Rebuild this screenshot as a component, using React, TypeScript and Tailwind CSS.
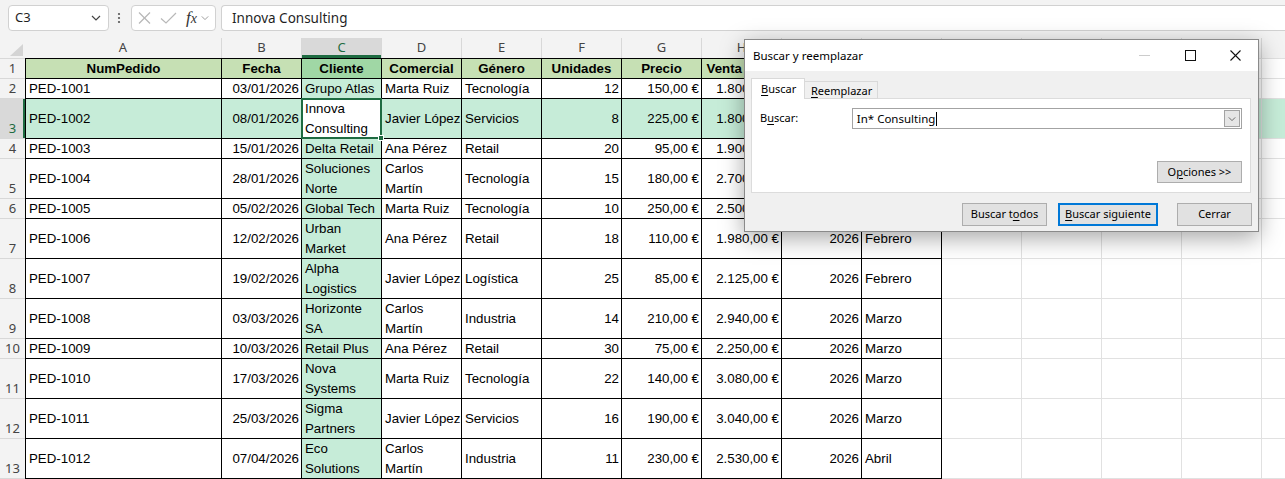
import React from "react";

const CELL_FONT = "font-['Liberation_Sans',Arial,sans-serif]";
const UI_FONT = "font-['Noto_Sans','Open_Sans',sans-serif]";

const LETTERS = ["A", "B", "C", "D", "E", "F", "G", "H", "I", "J", "K", "L", "M", "N", ""];
const COLW = [
  "w-[197px]",
  "w-[80px]",
  "w-[80px]",
  "w-[80px]",
  "w-[80px]",
  "w-[80px]",
  "w-[80px]",
  "w-[80px]",
  "w-[80px]",
  "w-[80px]",
  "w-[80px]",
  "w-[80px]",
  "w-[80px]",
  "w-[80px]",
  "w-[80px]",
];

type Val = string | string[];
type Row = { tall: boolean; v: Val[] };

const HEAD = ["NumPedido", "Fecha", "Cliente", "Comercial", "Género", "Unidades", "Precio", "Venta Total", "Año", "Mes"];
const ALIGN_R = [false, true, false, false, false, true, true, true, true, false];

const ROWS: Row[] = [
  { tall: false, v: ["PED-1001", "03/01/2026", "Grupo Atlas", "Marta Ruiz", "Tecnología", "12", "150,00 €", "1.800,00 €", "2026", "Enero"] },
  { tall: true, v: ["PED-1002", "08/01/2026", ["Innova", "Consulting"], "Javier López", "Servicios", "8", "225,00 €", "1.800,00 €", "2026", "Enero"] },
  { tall: false, v: ["PED-1003", "15/01/2026", "Delta Retail", "Ana Pérez", "Retail", "20", "95,00 €", "1.900,00 €", "2026", "Enero"] },
  { tall: true, v: ["PED-1004", "28/01/2026", ["Soluciones", "Norte"], ["Carlos", "Martín"], "Tecnología", "15", "180,00 €", "2.700,00 €", "2026", "Enero"] },
  { tall: false, v: ["PED-1005", "05/02/2026", "Global Tech", "Marta Ruiz", "Tecnología", "10", "250,00 €", "2.500,00 €", "2026", "Febrero"] },
  { tall: true, v: ["PED-1006", "12/02/2026", ["Urban", "Market"], "Ana Pérez", "Retail", "18", "110,00 €", "1.980,00 €", "2026", "Febrero"] },
  { tall: true, v: ["PED-1007", "19/02/2026", ["Alpha", "Logistics"], "Javier López", "Logística", "25", "85,00 €", "2.125,00 €", "2026", "Febrero"] },
  { tall: true, v: ["PED-1008", "03/03/2026", ["Horizonte", "SA"], ["Carlos", "Martín"], "Industria", "14", "210,00 €", "2.940,00 €", "2026", "Marzo"] },
  { tall: false, v: ["PED-1009", "10/03/2026", "Retail Plus", "Ana Pérez", "Retail", "30", "75,00 €", "2.250,00 €", "2026", "Marzo"] },
  { tall: true, v: ["PED-1010", "17/03/2026", ["Nova", "Systems"], "Marta Ruiz", "Tecnología", "22", "140,00 €", "3.080,00 €", "2026", "Marzo"] },
  { tall: true, v: ["PED-1011", "25/03/2026", ["Sigma", "Partners"], "Javier López", "Servicios", "16", "190,00 €", "3.040,00 €", "2026", "Marzo"] },
  { tall: true, v: ["PED-1012", "07/04/2026", ["Eco", "Solutions"], ["Carlos", "Martín"], "Industria", "11", "230,00 €", "2.530,00 €", "2026", "Abril"] },
];

function Chevron({ w = 10, color = "#444" }: { w?: number; color?: string }) {
  return (
    <svg width={w} height={6} viewBox="0 0 10 6" fill="none">
      <polyline points="1,1 5,5 9,1" stroke={color} strokeWidth="1.2" />
    </svg>
  );
}

function TopBar() {
  return (
    <div className={`flex h-[38px] items-start bg-[#f3f3f3] pt-[5px] ${UI_FONT}`}>
      <div className="ml-[8px] flex h-[26px] w-[101px] items-center justify-between rounded-[4px] border border-[#d1d1d1] bg-white pl-[6px] pr-[7px]">
        <span className="text-[13px] text-[#1f1f1f]">C3</span>
        <Chevron />
      </div>
      <div className="ml-[8px] mr-[10px] flex h-[26px] w-[4px] items-center">
        <svg width="4" height="14" viewBox="0 0 4 14">
          <circle cx="2" cy="3" r="1.1" fill="#555" />
          <circle cx="2" cy="7" r="1.1" fill="#555" />
          <circle cx="2" cy="11" r="1.1" fill="#555" />
        </svg>
      </div>
      <div className="flex h-[26px] w-[85px] items-center rounded-[4px] border border-[#d1d1d1] bg-white pl-[6px]">
        <svg width="13" height="12" viewBox="0 0 13 12" fill="none">
          <line x1="1" y1="0.5" x2="12" y2="11.5" stroke="#b8b8b8" strokeWidth="1.2" />
          <line x1="12" y1="0.5" x2="1" y2="11.5" stroke="#b8b8b8" strokeWidth="1.2" />
        </svg>
        <svg className="ml-[9px]" width="17" height="12" viewBox="0 0 17 12" fill="none">
          <polyline points="1,6.5 6,11 16,1" stroke="#b8b8b8" strokeWidth="1.2" />
        </svg>
        <span className="ml-[9px] font-['Liberation_Serif',serif] text-[17px] italic leading-[20px] text-[#333]">
          f<span className="text-[14px]">x</span>
        </span>
        <span className="ml-[4px]">
          <Chevron w={8} color="#999" />
        </span>
      </div>
      <div className="ml-[5px] flex h-[26px] flex-1 items-center rounded-l-[4px] border border-r-0 border-[#d1d1d1] bg-white pl-[10px] text-[13.5px] text-[#1f1f1f]">
        Innova Consulting
      </div>
    </div>
  );
}

function ColHeaders() {
  return (
    <div className={`flex h-[20px] bg-[#f3f3f3] ${UI_FONT} text-[13px]`}>
      <div className="relative h-[20px] w-[25px] shrink-0">
        <svg className="absolute bottom-[2px] right-[2px]" width="13" height="12" viewBox="0 0 13 12">
          <polygon points="0,12 13,12 13,0" fill="#d4d4d4" />
        </svg>
      </div>
      {LETTERS.map((l, c) => (
        <div
          key={c}
          className={`flex h-[20px] shrink-0 items-center justify-center border-r border-[#d8d8d8] ${COLW[c]} ${
            c === 2 ? "bg-[#d9d9d9] text-[#1e6b41] shadow-[inset_0_-3px_0_#1e6b41]" : "text-[#444]"
          }`}
        >
          {l}
        </div>
      ))}
    </div>
  );
}

function RowHead({ n, h, sel, first }: { n: number; h: string; sel: boolean; first?: boolean }) {
  return (
    <div
      className={`flex ${h} w-[25px] shrink-0 items-end justify-center border-b border-[#d8d8d8] ${first ? "border-t" : ""} ${UI_FONT} text-[13px] leading-[19px] ${
        sel ? "bg-[#d9d9d9] text-[#1e6b41] shadow-[inset_-2px_0_0_#1e6b41]" : "bg-[#f3f3f3] text-[#444]"
      }`}
    >
      {n}
    </div>
  );
}

function HeaderRow() {
  return (
    <div className="flex h-[21px]">
      <RowHead n={1} h="h-[21px]" sel={false} first />
      {LETTERS.map((_, c) => {
        const inT = c < 10;
        const bg = !inT ? "bg-white" : c === 2 ? "bg-[#a0d7a5]" : "bg-[#c6e0b4]";
        return (
          <div
            key={c}
            className={`flex h-full shrink-0 items-center justify-center overflow-hidden whitespace-nowrap border-b border-r border-t ${COLW[c]} ${
              c === 0 ? "border-l" : ""
            } ${inT ? "border-black" : "border-[#e1e1e1]"} ${bg} ${CELL_FONT} text-[13.3px] font-bold text-black`}
          >
            {inT ? HEAD[c] : ""}
          </div>
        );
      })}
    </div>
  );
}

function DataRow({ row, idx }: { row: Row; idx: number }) {
  const n = idx + 2;
  const sel = n === 3;
  const h = row.tall ? "h-[40px]" : "h-[20px]";
  return (
    <div className={`flex ${h}`}>
      <RowHead n={n} h={h} sel={sel} />
      {LETTERS.map((_, c) => {
        const inT = c < 10;
        const active = sel && c === 2;
        const bg = active ? "bg-white" : sel || c === 2 ? "bg-[#c6ecd8]" : "bg-white";
        const val = inT ? row.v[c] : "";
        const lines = Array.isArray(val) ? val : [val];
        return (
          <div
            key={c}
            className={`flex h-full shrink-0 flex-col justify-center border-b border-r ${COLW[c]} ${c === 0 ? "border-l" : ""} ${
              inT ? "border-black" : "border-[#e1e1e1]"
            } ${bg} ${active ? "relative" : "overflow-hidden"} ${
              ALIGN_R[c] ? "items-end pr-[2px]" : "items-start pl-[3px]"
            } ${CELL_FONT} text-[13.3px] text-black`}
          >
            {lines.map((t, i) => (
              <span key={i} className="block whitespace-nowrap leading-[20px]">
                {t}
              </span>
            ))}
            {active && (
              <div className="absolute -bottom-px -left-px -right-px -top-px z-10 border-2 border-[#1e6b41]">
                <div className="absolute -bottom-[4px] -right-[4px] h-[6px] w-[6px] border border-white bg-[#1e6b41]" />
              </div>
            )}
          </div>
        );
      })}
    </div>
  );
}

function U({ children }: { children: React.ReactNode }) {
  return <span className="underline underline-offset-[2px]">{children}</span>;
}

function Dialog() {
  return (
    <div
      className={`absolute left-[744px] top-[39px] z-20 flex h-[193px] w-[515px] flex-col border border-[#8a8a8a] bg-[#f0f0f0] shadow-[0_6px_22px_rgba(0,0,0,0.35)] ${UI_FONT} text-[11px] text-black`}
    >
      <div className="flex h-[31px] shrink-0 items-center bg-white">
        <span className="pl-[8px] text-[11.5px]">Buscar y reemplazar</span>
        <div className="ml-auto flex h-full">
          <div className="flex h-full w-[46px] items-center justify-center">
            <svg width="11" height="1" viewBox="0 0 11 1">
              <rect width="11" height="1" fill="#cccccc" />
            </svg>
          </div>
          <div className="flex h-full w-[46px] items-center justify-center">
            <svg width="11" height="11" viewBox="0 0 11 11" fill="none">
              <rect x="0.5" y="0.5" width="10" height="10" stroke="#111" strokeWidth="1" />
            </svg>
          </div>
          <div className="flex h-full w-[45px] items-center justify-center">
            <svg width="11" height="11" viewBox="0 0 11 11" fill="none">
              <line x1="0.5" y1="0.5" x2="10.5" y2="10.5" stroke="#111" strokeWidth="1.1" />
              <line x1="10.5" y1="0.5" x2="0.5" y2="10.5" stroke="#111" strokeWidth="1.1" />
            </svg>
          </div>
        </div>
      </div>
      <div className="flex flex-1 flex-col px-[6px] pt-[7px]">
        <div className="relative z-10 -mb-px flex h-[21px] items-end">
          <div className="h-[21px] w-[54px] border border-b-0 border-[#d9d9d9] bg-white pl-[9px] leading-[20px]">
            <U>B</U>uscar
          </div>
          <div className="h-[18px] w-[73px] border border-l-0 border-[#d9d9d9] bg-[#f0f0f0] pl-[6px] leading-[17px]">
            <U>R</U>eemplazar
          </div>
        </div>
        <div className="h-[95px] w-[500px] border border-[#dcdcdc] bg-white px-[8px] pt-[9px]">
          <div className="flex h-[21px] items-center">
            <span className="w-[92px]">
              B<U>u</U>scar:
            </span>
            <div className="flex h-[21px] w-[391px] items-center border border-[#a3a3a3] bg-white pl-[4px]">
              <span className="text-[11.5px]">In* Consulting</span>
              <span className="ml-px inline-block h-[14px] w-px bg-black" />
              <div className="ml-auto mr-px flex h-[17px] w-[16px] items-center justify-center border border-[#a3a3a3] bg-[#e6e6e6]">
                <Chevron w={8} color="#666" />
              </div>
            </div>
          </div>
          <div className="mt-[32px] flex justify-end">
            <div className="flex h-[22px] w-[85px] items-center justify-center border border-[#adadad] bg-[#e1e1e1]">
              O<U>p</U>ciones &gt;&gt;
            </div>
          </div>
        </div>
        <div className="mt-[10px] flex justify-end">
          <div className="flex h-[23px] w-[85px] items-center justify-center border border-[#adadad] bg-[#e1e1e1]">
            Buscar t<U>o</U>dos
          </div>
          <div className="ml-[11px] flex h-[23px] w-[100px] items-center justify-center border-2 border-[#0078d7] bg-[#e1e1e1]">
            <U>B</U>uscar siguiente
          </div>
          <div className="ml-[19px] flex h-[23px] w-[75px] items-center justify-center border border-[#adadad] bg-[#e1e1e1]">
            Cerrar
          </div>
        </div>
      </div>
    </div>
  );
}

export default function App() {
  return (
    <div className="relative h-[479px] w-[1285px] overflow-hidden bg-white">
      <TopBar />
      <ColHeaders />
      <HeaderRow />
      {ROWS.map((r, i) => (
        <DataRow key={i} row={r} idx={i} />
      ))}
      <Dialog />
    </div>
  );
}
